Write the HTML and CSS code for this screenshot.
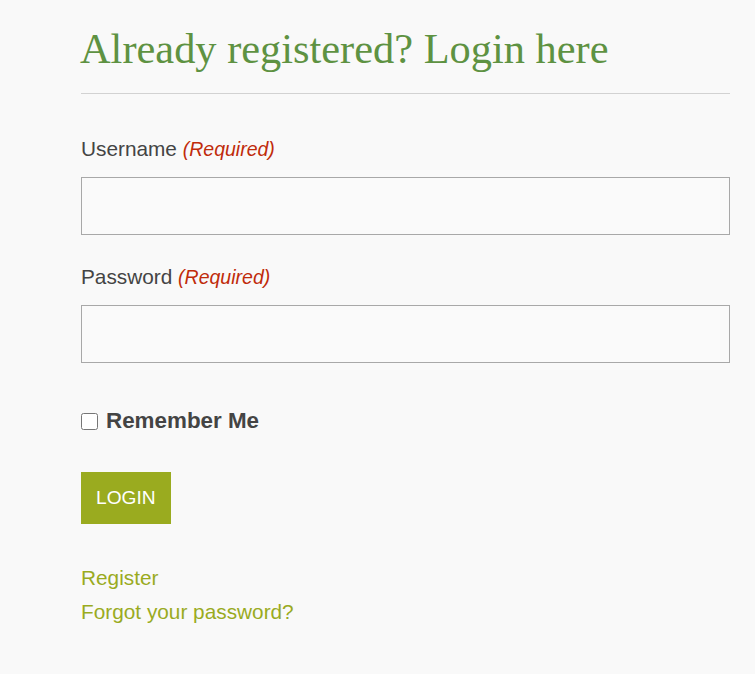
FILE: index.html
```html
<!DOCTYPE html>
<html lang="en">
<head>
<meta charset="utf-8">
<title>Login</title>
<link rel="stylesheet" href="styles.css">
</head>
<body>
<div class="wrap">
  <h1 class="title">Already registered? Login here</h1>
  <hr class="rule">
  <form class="form">
    <label class="label label-first" for="user">Username <span class="req">(Required)</span></label>
    <input class="field" id="user" type="text">
    <label class="label" for="pass">Password <span class="req">(Required)</span></label>
    <input class="field" id="pass" type="password">
    <label class="remember"><input class="check" type="checkbox"> Remember Me</label>
    <button class="btn" type="button">LOGIN</button>
  </form>
  <div class="links">
    <a class="link" href="#">Register</a>
    <a class="link" href="#">Forgot your password?</a>
  </div>
</div>
</body>
</html>
```
FILE: styles.css
```css
html, body {
  margin: 0;
  padding: 0;
  background: #f9f9f9;
}
body {
  font-family: "Liberation Sans", Arial, sans-serif;
  color: #444;
}
.wrap {
  margin-left: 81px;
  width: 649px;
  padding-top: 24px;
}
.title {
  margin: 0 0 0 -1px;
  font-family: "Liberation Serif", "Times New Roman", serif;
  font-weight: normal;
  font-size: 42.4px;
  line-height: 50px;
  color: #5e9242;
}
.rule {
  margin: 19px 0 0 0;
  border: 0;
  border-top: 1px solid #d2d2d2;
  height: 0;
}
.form {
  display: flex;
  flex-direction: column;
  align-items: flex-start;
}
.label {
  display: block;
  font-size: 20.8px;
  line-height: 30px;
  margin-top: 27px;
  color: #444;
}
.label-first {
  margin-top: 40px;
}
.req {
  font-style: italic;
  font-size: 19.5px;
  color: #c02b0a;
}
.field {
  box-sizing: border-box;
  width: 649px;
  height: 58px;
  margin: 13px 0 0 0;
  border: 1px solid #a8a8a8;
  background: #fafafa;
  font-size: 20px;
  padding: 0 10px;
  outline: none;
}
.remember {
  display: flex;
  align-items: center;
  gap: 8px;
  margin-top: 43px;
  font-size: 22.4px;
  font-weight: bold;
  line-height: 30px;
  color: #444;
}
.check {
  width: 17px;
  height: 17px;
  margin: 0;
}
.btn {
  margin-top: 36px;
  height: 52px;
  padding: 0 15px;
  border: 0;
  background: #9aab1f;
  color: #fff;
  font-family: "Liberation Sans", Arial, sans-serif;
  font-size: 19.2px;
  line-height: 52px;
}
.links {
  margin-top: 37px;
  display: flex;
  flex-direction: column;
  align-items: flex-start;
}
.link {
  font-size: 20.8px;
  line-height: 34px;
  color: #9aab1f;
  text-decoration: none;
}
```
